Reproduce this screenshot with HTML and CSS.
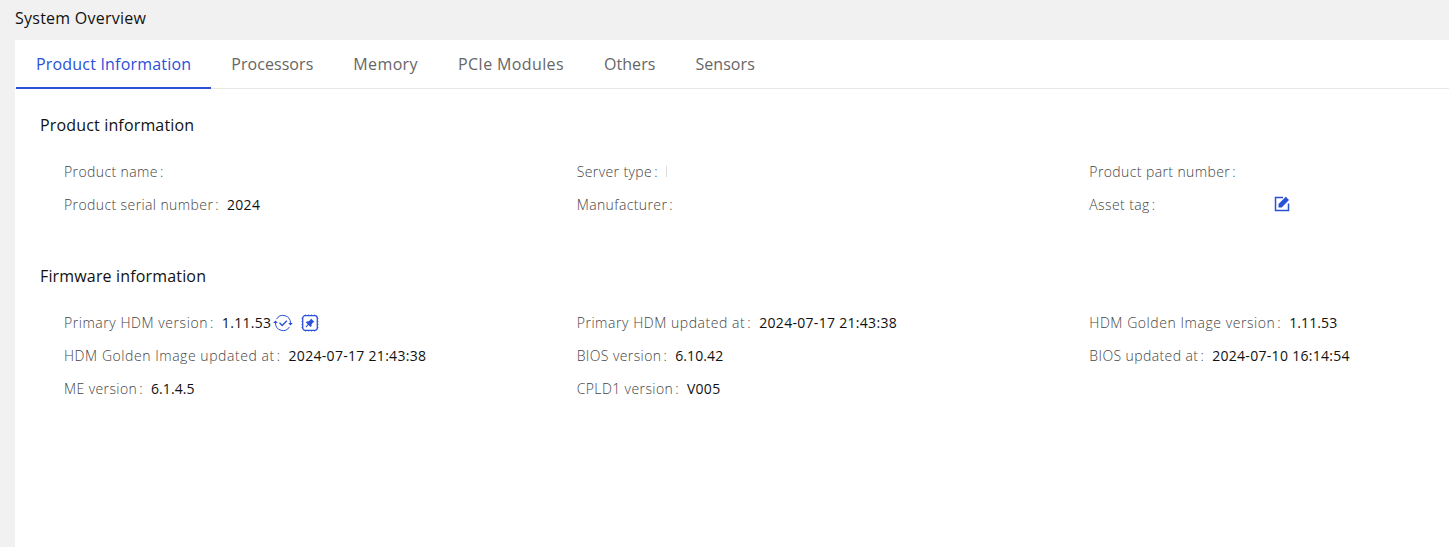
FILE: index.html
```html
<!DOCTYPE html>
<html lang="en-US">
  <head>
    <title>System Overview</title>
    <meta charset="utf-8" />
    <link rel="stylesheet" href="styles.css">
  </head>
  <body>
    <header class="page-title">System Overview</header>
    <main class="panel">
      <nav class="tabs">
        <a class="tab active">Product Information</a>
        <a class="tab">Processors</a>
        <a class="tab wide">Memory</a>
        <a class="tab wide">PCIe Modules</a>
        <a class="tab">Others</a>
        <a class="tab">Sensors</a>
      </nav>
      <section class="group">
        <h2>Product information</h2>
        <div class="fields">
          <div class="field"><span class="label">Product name</span></div>
          <div class="field">
            <span class="label">Server type</span>
            <span class="caret"></span>
          </div>
          <div class="field"><span class="label">Product part number</span></div>
          <div class="field">
            <span class="label">Product serial number</span>
            <span class="value">2024</span>
          </div>
          <div class="field"><span class="label">Manufacturer</span></div>
          <div class="field">
            <span class="label">Asset tag</span>
            <span class="value asset"></span>
            <svg class="icon edit" viewBox="0 0 16 16">
              <path d="M9 1.500h-7.500v13h13v-7" fill="none" stroke="currentColor" stroke-width="1.500" />
              <path d="M4.500 11.500v-3.500l7.300-7.300 3.200 3.200-7.300 7.600z" fill="currentColor" />
            </svg>
          </div>
        </div>
      </section>
      <section class="group">
        <h2>Firmware information</h2>
        <div class="fields">
          <div class="field">
            <span class="label wide">Primary HDM version</span>
            <span class="value">1.11.53</span>
            <svg class="icon sync" viewBox="0 0 20 18">
              <g fill="none" stroke="currentColor">
                <path d="M3.500 5.200a7.500 7.500 0 0 1 14 3.800v1.500" />
                <path d="M16.500 12.800a7.500 7.500 0 0 1-14-3.800v-1.500" />
                <path d="M6.500 8.800l2.700 2.600 4.600-4.600" stroke-width="1.400" />
              </g>
              <path d="M15.200 9h4.600l-2.300 2.400zM.2 9h4.600l-2.300-2.400z" fill="currentColor" />
            </svg>
            <svg class="icon chip" viewBox="0 0 18 18">
              <path d="M4.500 0v2M7.500 0v2M10.500 0v2M13.500 0v2M4.500 16v2M7.500 16v2M10.500 16v2M13.500 16v2M0 4.500h2M0 7.500h2M0 10.500h2M0 13.500h2M16 4.500h2M16 7.500h2M16 10.500h2M16 13.500h2" stroke="currentColor" opacity=".4" />
              <rect x="1.700" y="1.700" width="14.600" height="14.600" rx="2.500" fill="none" stroke="currentColor" stroke-width="1.300" />
              <path d="M10 4.500l3.500 3.500-1.200.3-1.600 1.700-.2 2.300-1 .7-1.900-1.900-2.400 2.300-.7-.7 2.300-2.400-1.900-1.900.7-.9 2.300-.2 1.700-1.700z" fill="currentColor" />
            </svg>
          </div>
          <div class="field">
            <span class="label wide">Primary HDM updated at</span>
            <span class="value">2024-07-17 21:43:38</span>
          </div>
          <div class="field">
            <span class="label wide">HDM Golden Image version</span>
            <span class="value version">1.11.53</span>
          </div>
          <div class="field">
            <span class="label wide">HDM Golden Image updated at</span>
            <span class="value">2024-07-17 21:43:38</span>
          </div>
          <div class="field">
            <span class="label">BIOS version</span>
            <span class="value version">6.10.42</span>
          </div>
          <div class="field">
            <span class="label">BIOS updated at</span>
            <span class="value">2024-07-10 16:14:54</span>
          </div>
          <div class="field">
            <span class="label">ME version</span>
            <span class="value version">6.1.4.5</span>
          </div>
          <div class="field">
            <span class="label">CPLD1 version</span>
            <span class="value">V005</span>
          </div>
        </div>
      </section>
    </main>
  </body>
</html>
```
FILE: styles.css
```css
* {
  box-sizing: border-box;
}
body {
  margin: 0;
  height: 100vh;
  overflow: hidden;
  display: flex;
  flex-direction: column;
  background: #f1f1f1;
  color: #111;
  font-family: "Open Sans", "Noto Sans", sans-serif;
  font-size: 14px;
}
.page-title {
  height: 40px;
  padding-left: 15px;
  font-size: 16px;
  line-height: 36px;
  letter-spacing: 0.25px;
}
.panel {
  flex: 1;
  margin-left: 15px;
  background: #fff;
}
.tabs {
  display: flex;
  height: 49px;
  padding-left: 1px;
  border-bottom: 1px solid #e8e8e8;
}
.tab {
  height: 49px;
  padding: 0 20px;
  color: #666;
  font-size: 16px;
  line-height: 48px;
  letter-spacing: 0.06px;
  white-space: nowrap;
}
.tab.wide {
  letter-spacing: 0.37px;
}
.tab.active {
  color: #2b50d8;
  letter-spacing: 0.19px;
  border-bottom: 2px solid #2b50d8;
}
.group {
  padding: 24px 0 0 25px;
  height: 151px;
}
.group h2 {
  margin: 0;
  font-size: 16px;
  font-weight: 400;
  line-height: 24px;
  letter-spacing: 0.16px;
}
.fields {
  display: grid;
  grid-template-columns: 512.67px 512.67px 1fr;
  grid-auto-rows: 33px;
  padding: 18px 0 0 24px;
}
.field {
  display: flex;
  align-items: center;
  white-space: nowrap;
}
.label {
  color: #444;
  font-weight: 300;
  letter-spacing: 0.4px;
}
.label.wide {
  letter-spacing: 0.55px;
}
.label::after {
  content: ":";
  margin: 0 8px 0 2px;
}
.value {
  color: #111;
  letter-spacing: 0.3px;
}
.value.version {
  letter-spacing: 0.1px;
}
.caret {
  width: 1px;
  height: 11px;
  background: #ddd;
}
.asset {
  width: 110px;
}
.icon {
  color: #2b50d8;
}
.edit {
  width: 16px;
  height: 16px;
  margin-bottom: 2px;
}
.sync {
  width: 20px;
  height: 18px;
  margin-left: 2px;
}
.chip {
  width: 18px;
  height: 18px;
  margin-left: 8px;
}
```
